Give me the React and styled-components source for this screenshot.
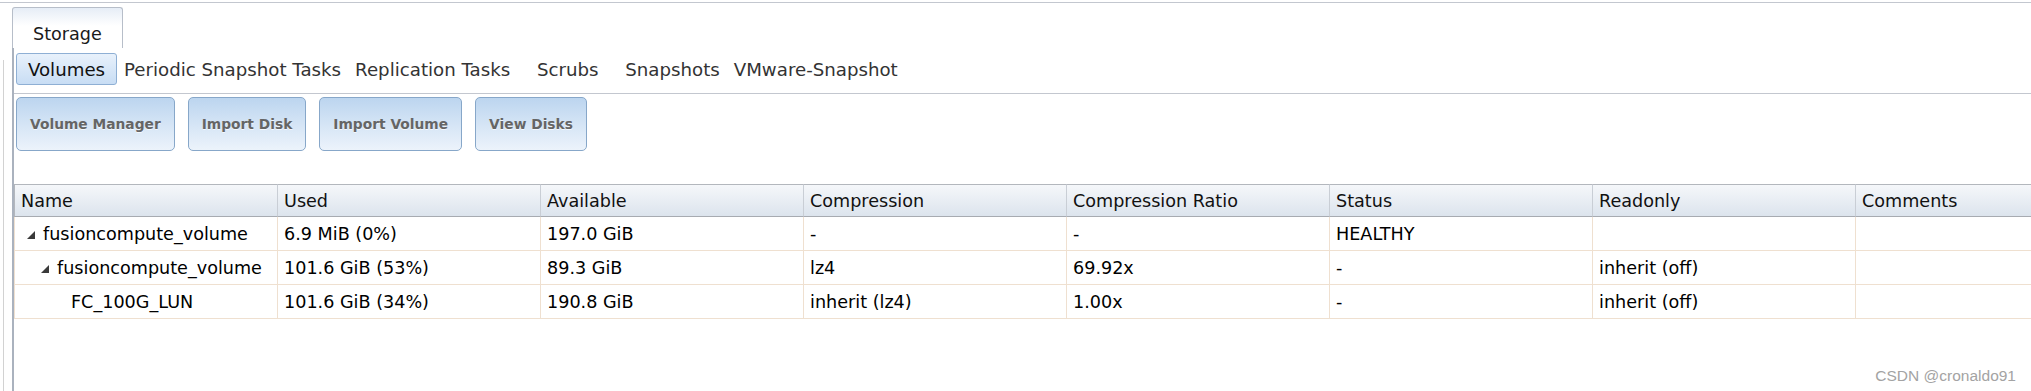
import React from 'react';
import styled, { createGlobalStyle } from 'styled-components';

const GlobalStyle = createGlobalStyle`
  html, body {
    margin: 0;
    padding: 0;
    background: #ffffff;
  }
  body {
    font-family: "DejaVu Sans", Verdana, sans-serif;
    font-size: 17.6px;
    color: #000;
    overflow: hidden;
  }
`;

const Frame = styled.div`
  position: relative;
  display: flex;
  margin-top: 2px;
  border-top: 1px solid #c3c7cf;
  height: calc(100vh - 3px);
  overflow: hidden;
`;

const LeftRail = styled.div`
  flex: 0 0 3px;
  margin-top: 57px;
  border-right: 1px solid #d2d2d2;
`;

const Main = styled.div`
  flex: 1;
  min-width: 0;
  display: flex;
  flex-direction: column;
  padding-left: 8px;
`;

const TabStrip = styled.div`
  display: flex;
  padding-top: 4px;
`;

const TopTab = styled.div`
  box-sizing: border-box;
  height: 41px;
  padding: 0 20px 4px;
  display: flex;
  align-items: flex-end;
  line-height: 20px;
  color: #1a1a1a;
  border: 1px solid #b7bec9;
  border-bottom: none;
  border-radius: 3px 3px 0 0;
  background: linear-gradient(#e6edf6 0%, #ffffff 45%);
`;

const Panel = styled.div`
  flex: 1;
  min-height: 0;
  display: flex;
  flex-direction: column;
  border-left: 2px solid #aab2be;
  overflow: hidden;
`;

const SubNav = styled.div`
  box-sizing: border-box;
  height: 46px;
  display: flex;
  align-items: flex-start;
  padding: 5px 0 0 2px;
  border-bottom: 1px solid #c3c7cf;
`;

const SubTab = styled.div`
  box-sizing: border-box;
  height: 32px;
  min-width: 101px;
  padding: 0 6px;
  display: flex;
  align-items: center;
  justify-content: center;
  white-space: nowrap;
  font-size: 18.2px;
  color: ${({ $active }) => ($active ? '#111' : '#333')};
  border: 1px solid ${({ $active }) => ($active ? '#8eafd4' : 'transparent')};
  border-radius: 3px;
  background: ${({ $active }) =>
    $active ? 'linear-gradient(#e8f1fb, #c8ddf4)' : 'transparent'};
`;

const Toolbar = styled.div`
  display: flex;
  gap: 13px;
  padding: 3px 0 33px 2px;
`;

const ActionButton = styled.div`
  box-sizing: border-box;
  height: 54px;
  padding: 0 13px;
  display: flex;
  align-items: center;
  font-size: 13.8px;
  font-weight: bold;
  color: #656565;
  text-shadow: 0 1px 0 rgba(255, 255, 255, 0.7);
  white-space: nowrap;
  border: 1px solid #87a7c9;
  border-radius: 5px;
  background: linear-gradient(#bcd5ef 0%, #d7e6f6 55%, #ecf3fb 100%);
`;

const Grid = styled.div`
  display: grid;
  grid-template-columns: 264px repeat(7, 263px);
  width: max-content;
`;

const HeadCell = styled.div`
  box-sizing: border-box;
  height: 33px;
  padding-left: 6px;
  display: flex;
  align-items: center;
  white-space: nowrap;
  color: #111;
  border-top: 1px solid #b3b7bd;
  border-bottom: 1px solid #a7abb1;
  border-right: 1px solid #c9ced5;
  border-left: ${({ $first }) => ($first ? '1px solid #b3b7bd' : 'none')};
  background: linear-gradient(#f5f7fa, #dce4ed);
`;

const Cell = styled.div`
  box-sizing: border-box;
  height: 34px;
  padding-left: ${({ $indent = 0 }) => 6 + $indent}px;
  display: flex;
  align-items: center;
  white-space: nowrap;
  border-bottom: 1px solid #efe0d0;
  border-right: 1px solid #efe0d0;
  border-left: ${({ $first }) => ($first ? '1px solid #efe0d0' : 'none')};
`;

const Toggle = styled.span`
  flex: 0 0 22px;
  display: flex;
  align-items: center;
  padding-left: 6px;
  box-sizing: border-box;
  margin-top: 2px;
`;

const Watermark = styled.div`
  position: absolute;
  right: 15px;
  bottom: 6px;
  font-family: "Liberation Sans", Arial, sans-serif;
  font-size: 15.5px;
  color: #a3a3a3;
`;

const Expander = ({ open }) => (
  <Toggle>
    {open && (
      <svg width="8" height="8" viewBox="0 0 8 8">
        <polygon points="8,0 8,8 0,8" fill="#3a3a3a" />
      </svg>
    )}
  </Toggle>
);

const subTabs = [
  'Volumes',
  'Periodic Snapshot Tasks',
  'Replication Tasks',
  'Scrubs',
  'Snapshots',
  'VMware-Snapshot',
];

const actions = ['Volume Manager', 'Import Disk', 'Import Volume', 'View Disks'];

const columns = [
  'Name',
  'Used',
  'Available',
  'Compression',
  'Compression Ratio',
  'Status',
  'Readonly',
  'Comments',
];

const rows = [
  {
    level: 0,
    open: true,
    cells: ['fusioncompute_volume', '6.9 MiB (0%)', '197.0 GiB', '-', '-', 'HEALTHY', '', ''],
  },
  {
    level: 1,
    open: true,
    cells: ['fusioncompute_volume', '101.6 GiB (53%)', '89.3 GiB', 'lz4', '69.92x', '-', 'inherit (off)', ''],
  },
  {
    level: 2,
    open: false,
    cells: ['FC_100G_LUN', '101.6 GiB (34%)', '190.8 GiB', 'inherit (lz4)', '1.00x', '-', 'inherit (off)', ''],
  },
];

export default function App() {
  return (
    <>
      <GlobalStyle />
      <Frame>
        <LeftRail />
        <Main>
          <TabStrip>
            <TopTab>Storage</TopTab>
          </TabStrip>
          <Panel>
            <SubNav>
              {subTabs.map((t, i) => (
                <SubTab key={t} $active={i === 0}>
                  {t}
                </SubTab>
              ))}
            </SubNav>
            <Toolbar>
              {actions.map((a) => (
                <ActionButton key={a}>{a}</ActionButton>
              ))}
            </Toolbar>
            <Grid>
              {columns.map((c, i) => (
                <HeadCell key={c} $first={i === 0}>
                  {c}
                </HeadCell>
              ))}
              {rows.map((r, ri) =>
                r.cells.map((v, ci) =>
                  ci === 0 ? (
                    <Cell key={`${ri}-${ci}`} $first $indent={r.level * 14}>
                      <Expander open={r.open} />
                      {v}
                    </Cell>
                  ) : (
                    <Cell key={`${ri}-${ci}`}>{v}</Cell>
                  )
                )
              )}
            </Grid>
          </Panel>
        </Main>
        <Watermark>CSDN @cronaldo91</Watermark>
      </Frame>
    </>
  );
}
